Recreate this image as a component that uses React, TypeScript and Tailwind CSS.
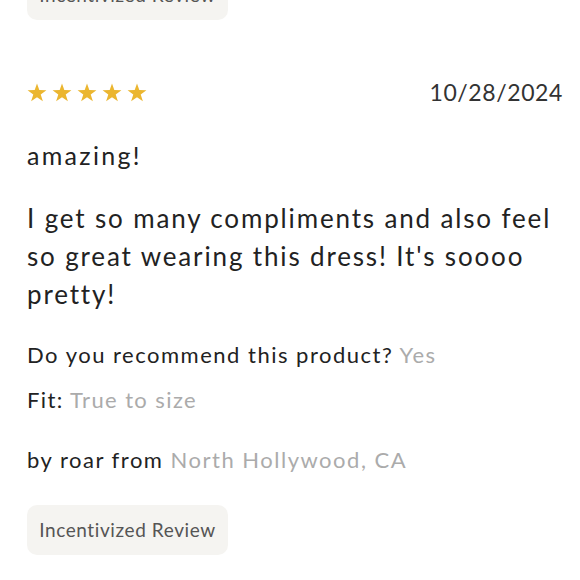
import React from "react";

function Star() {
  return (
    <svg width="20" height="19" viewBox="0 0 24 23" className="block">
      <polygon
        points="12,0.5 14.8,8.6 23.4,8.7 16.5,13.9 19.1,22.2 12,17.2 4.9,22.2 7.5,13.9 0.6,8.7 9.2,8.6"
        fill="#EBB630"
      />
    </svg>
  );
}

export default function App() {
  return (
    <div
      className="w-[580px] h-[580px] overflow-hidden bg-white pl-[27px] pr-[17px] text-[#222]"
      style={{ fontFamily: "Lato, 'Noto Sans', sans-serif" }}
    >
      <div className="mt-[-30px] h-[50px] w-[201px] rounded-[10px] bg-[#f5f4f1] flex items-center justify-center text-[19px] tracking-[0.6px] text-[#555]">
        Incentivized Review
      </div>

      <div className="mt-[57px] h-[30px] flex items-center justify-between">
        <div className="flex items-center gap-[5px]">
          <Star />
          <Star />
          <Star />
          <Star />
          <Star />
        </div>
        <div className="text-[23px] leading-[30px] tracking-[0.6px] text-[#333]">10/28/2024</div>
      </div>

      <div className="mt-[30px] text-[25px] leading-[36px] tracking-[2.3px]">amazing!</div>

      <p className="mt-[26px] text-[26px] leading-[38px] tracking-[1.85px] whitespace-nowrap">
        I get so many compliments and also feel
        <br />
        so great wearing this dress! It's soooo
        <br />
        pretty!
      </p>

      <div className="mt-[26px] text-[22px] leading-[32px] tracking-[1.5px] whitespace-nowrap">
        Do you recommend this product? <span className="text-[#ababab]">Yes</span>
      </div>
      <div className="mt-[13px] text-[22px] leading-[32px] tracking-[1.4px]">
        Fit: <span className="text-[#ababab]">True to size</span>
      </div>
      <div className="mt-[28px] text-[22px] leading-[32px] tracking-[1.5px] whitespace-nowrap">
        by roar from <span className="text-[#ababab]">North Hollywood, CA</span>
      </div>

      <div className="mt-[29px] h-[50px] w-[201px] rounded-[10px] bg-[#f5f4f1] flex items-center justify-center text-[19px] tracking-[0.6px] text-[#555]">
        Incentivized Review
      </div>
    </div>
  );
}
